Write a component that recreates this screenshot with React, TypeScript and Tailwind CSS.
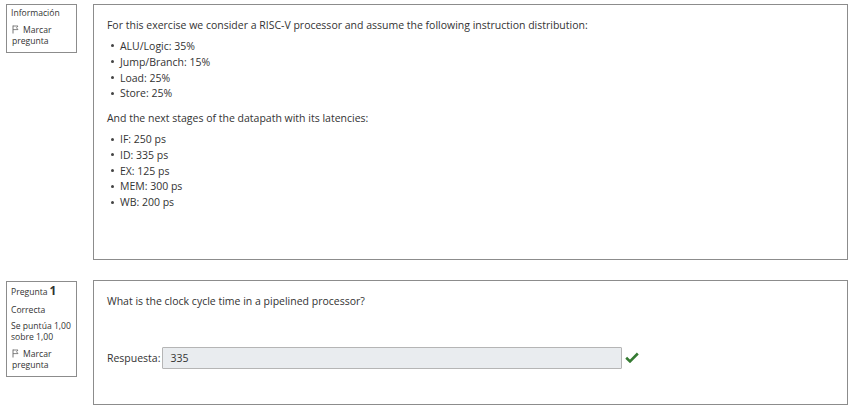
import React from "react";

const font = { fontFamily: '"Open Sans", "Noto Sans", sans-serif' };

function Flag() {
  return (
    <svg width="7" height="9" viewBox="0 0 7 9" className="inline-block mr-[4px] -mt-[2px]">
      <path d="M1 0.5 V8.5" stroke="#666" strokeWidth="0.9" fill="none" />
      <path d="M1 1 H6 L4.5 2.8 L6 4.6 H1" stroke="#666" strokeWidth="0.8" fill="none" />
    </svg>
  );
}

function Bullets({ items }: { items: string[] }) {
  return (
    <ul className="mt-[5px]">
      {items.map((t) => (
        <li key={t} className="flex items-center h-[15.8px]">
          <span className="w-[3px] h-[3px] rounded-full bg-[#444] ml-[4px] mr-[6px]" />
          {t}
        </li>
      ))}
    </ul>
  );
}

export default function App() {
  return (
    <div className="w-[848px] h-[412px] overflow-hidden bg-white text-[#333]" style={font}>
      <div className="pt-[4px] pl-[6px] flex flex-col gap-[20px]">
        <div className="flex gap-[16px] items-start">
          <div className="w-[73px] border border-[#8c8c8c] px-[4px] pt-[3px] pb-[5px] text-[8.6px] leading-[11px]">
            <div className="mb-[6px]">Información</div>
            <div className="pl-[1px]">
              <Flag />Marcar
              <br />
              pregunta
            </div>
          </div>
          <div className="w-[780px] h-[256px] border border-[#8c8c8c] pl-[13px] pt-[12px] text-[10.5px] leading-[16px]">
            <p>For this exercise we consider a RISC-V processor and assume the following instruction distribution:</p>
            <Bullets items={["ALU/Logic: 35%", "Jump/Branch: 15%", "Load: 25%", "Store: 25%"]} />
            <p className="mt-[9px]">And the next stages of the datapath with its latencies:</p>
            <Bullets items={["IF: 250 ps", "ID: 335 ps", "EX: 125 ps", "MEM: 300 ps", "WB: 200 ps"]} />
          </div>
        </div>
        <div className="flex gap-[16px] items-start">
          <div className="w-[73px] mt-[1px] border border-[#8c8c8c] px-[4px] pt-[3px] pb-[5px] text-[8.6px] leading-[11px]">
            <div className="flex items-baseline">
              Pregunta<span className="text-[12px] font-bold ml-[2px] leading-[11px]">1</span>
            </div>
            <div className="mt-[7px]">Correcta</div>
            <div className="mt-[5px]">
              Se puntúa 1,00
              <br />
              sobre 1,00
            </div>
            <div className="mt-[6px] pl-[1px]">
              <Flag />Marcar
              <br />
              pregunta
            </div>
          </div>
          <div className="w-[780px] h-[125px] border border-[#8c8c8c] pl-[13px] pt-[12px] text-[10.5px] leading-[16px]">
            <p>What is the clock cycle time in a pipelined processor?</p>
            <div className="flex items-center mt-[38px]">
              <span>Respuesta:</span>
              <div className="ml-[2px] w-[460px] h-[22px] bg-[#e9ecef] border border-[#b5b5b5] rounded-[1px] flex items-center pl-[7px]">
                335
              </div>
              <svg width="14" height="11" viewBox="0 0 14 11" className="ml-[3px] -mt-[2px]">
                <path d="M1.2 5.8 L5 9.4 L12.8 1.5" stroke="#357a32" strokeWidth="2.6" fill="none" strokeLinejoin="miter" />
              </svg>
            </div>
          </div>
        </div>
      </div>
    </div>
  );
}
